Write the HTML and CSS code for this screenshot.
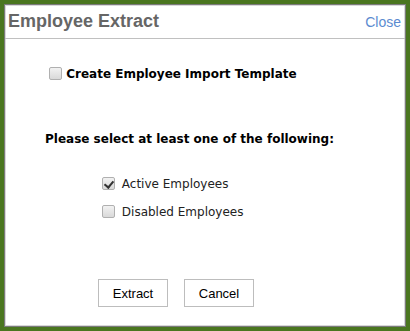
FILE: index.html
```html
<!DOCTYPE html>
<html lang="en">
<head>
    <meta charset="UTF-8">
    <title>Employee Extract</title>
    <link rel="stylesheet" href="styles.css">
</head>
<body>
    <div class="dialog">
        <div class="dialog-header">
            <h1>Employee Extract</h1>
            <a class="close" href="#">Close</a>
        </div>
        <div class="dialog-body">
            <label class="template-option">
                <input type="checkbox"> Create Employee Import Template
            </label>

            <p class="prompt">Please select at least one of the following:</p>

            <div class="choices">
                <label class="choice"><input type="checkbox" checked> Active Employees</label>
                <label class="choice"><input type="checkbox"> Disabled Employees</label>
            </div>

            <div class="actions">
                <button>Extract</button>
                <button>Cancel</button>
            </div>
        </div>
    </div>
</body>
</html>
```

FILE: styles.css
```css
* {
    box-sizing: border-box;
}

body {
    margin: 0;
    padding: 4px 4px 4px 4px;
    background-color: #4a761f;
    height: 331px;
    overflow: hidden;
}

.dialog {
    height: 323px;
    background: #fff;
    border: 1px solid #7a7a7a;
    box-shadow: inset 0 0 0 1px #d8d8d8;
    font-family: "DejaVu Sans", Verdana, sans-serif;
}

.dialog-header {
    display: flex;
    justify-content: space-between;
    align-items: center;
    height: 34px;
    padding: 0 4px 0 3px;
    border-bottom: 1px solid #c0c0c0;
}

.dialog-header h1 {
    margin: 0;
    font-family: "Liberation Sans", Arial, sans-serif;
    font-size: 18px;
    font-weight: bold;
    color: #666;
}

.close {
    font-family: "Liberation Sans", Arial, sans-serif;
    font-size: 14px;
    color: #5b8bd0;
    text-decoration: none;
}

.dialog-body {
    padding: 0;
}

input[type="checkbox"] {
    appearance: none;
    -webkit-appearance: none;
    position: relative;
    width: 13px;
    height: 13px;
    margin: 0;
    border: 1px solid #b0b0b0;
    border-radius: 2px;
    background: linear-gradient(#f2f2f2, #d9d9d9);
    vertical-align: -2px;
}

input[type="checkbox"]:checked::after {
    content: "";
    position: absolute;
    left: 3px;
    top: 1px;
    width: 4px;
    height: 7px;
    border: solid #333;
    border-width: 0 2px 2px 0;
    transform: rotate(40deg);
}

.template-option {
    display: block;
    margin: 28px 0 0 44px;
    font-size: 12px;
    font-weight: bold;
    color: #000;
}

.prompt {
    margin: 51px 0 0 40px;
    font-size: 12px;
    font-weight: bold;
    color: #000;
}

.choices {
    display: flex;
    flex-direction: column;
    gap: 14px;
    margin: 31px 0 0 97px;
}

.choice {
    font-size: 12px;
    color: #222;
}

.choice input {
    margin-right: 3px;
}

.actions {
    display: flex;
    gap: 16px;
    margin: 60px 0 0 93px;
}

.actions button {
    width: 70px;
    height: 28px;
    background: #fff;
    border: 1px solid #bdbdbd;
    font-family: "Liberation Sans", Arial, sans-serif;
    font-size: 13px;
    color: #000;
    padding: 0;
}
```
